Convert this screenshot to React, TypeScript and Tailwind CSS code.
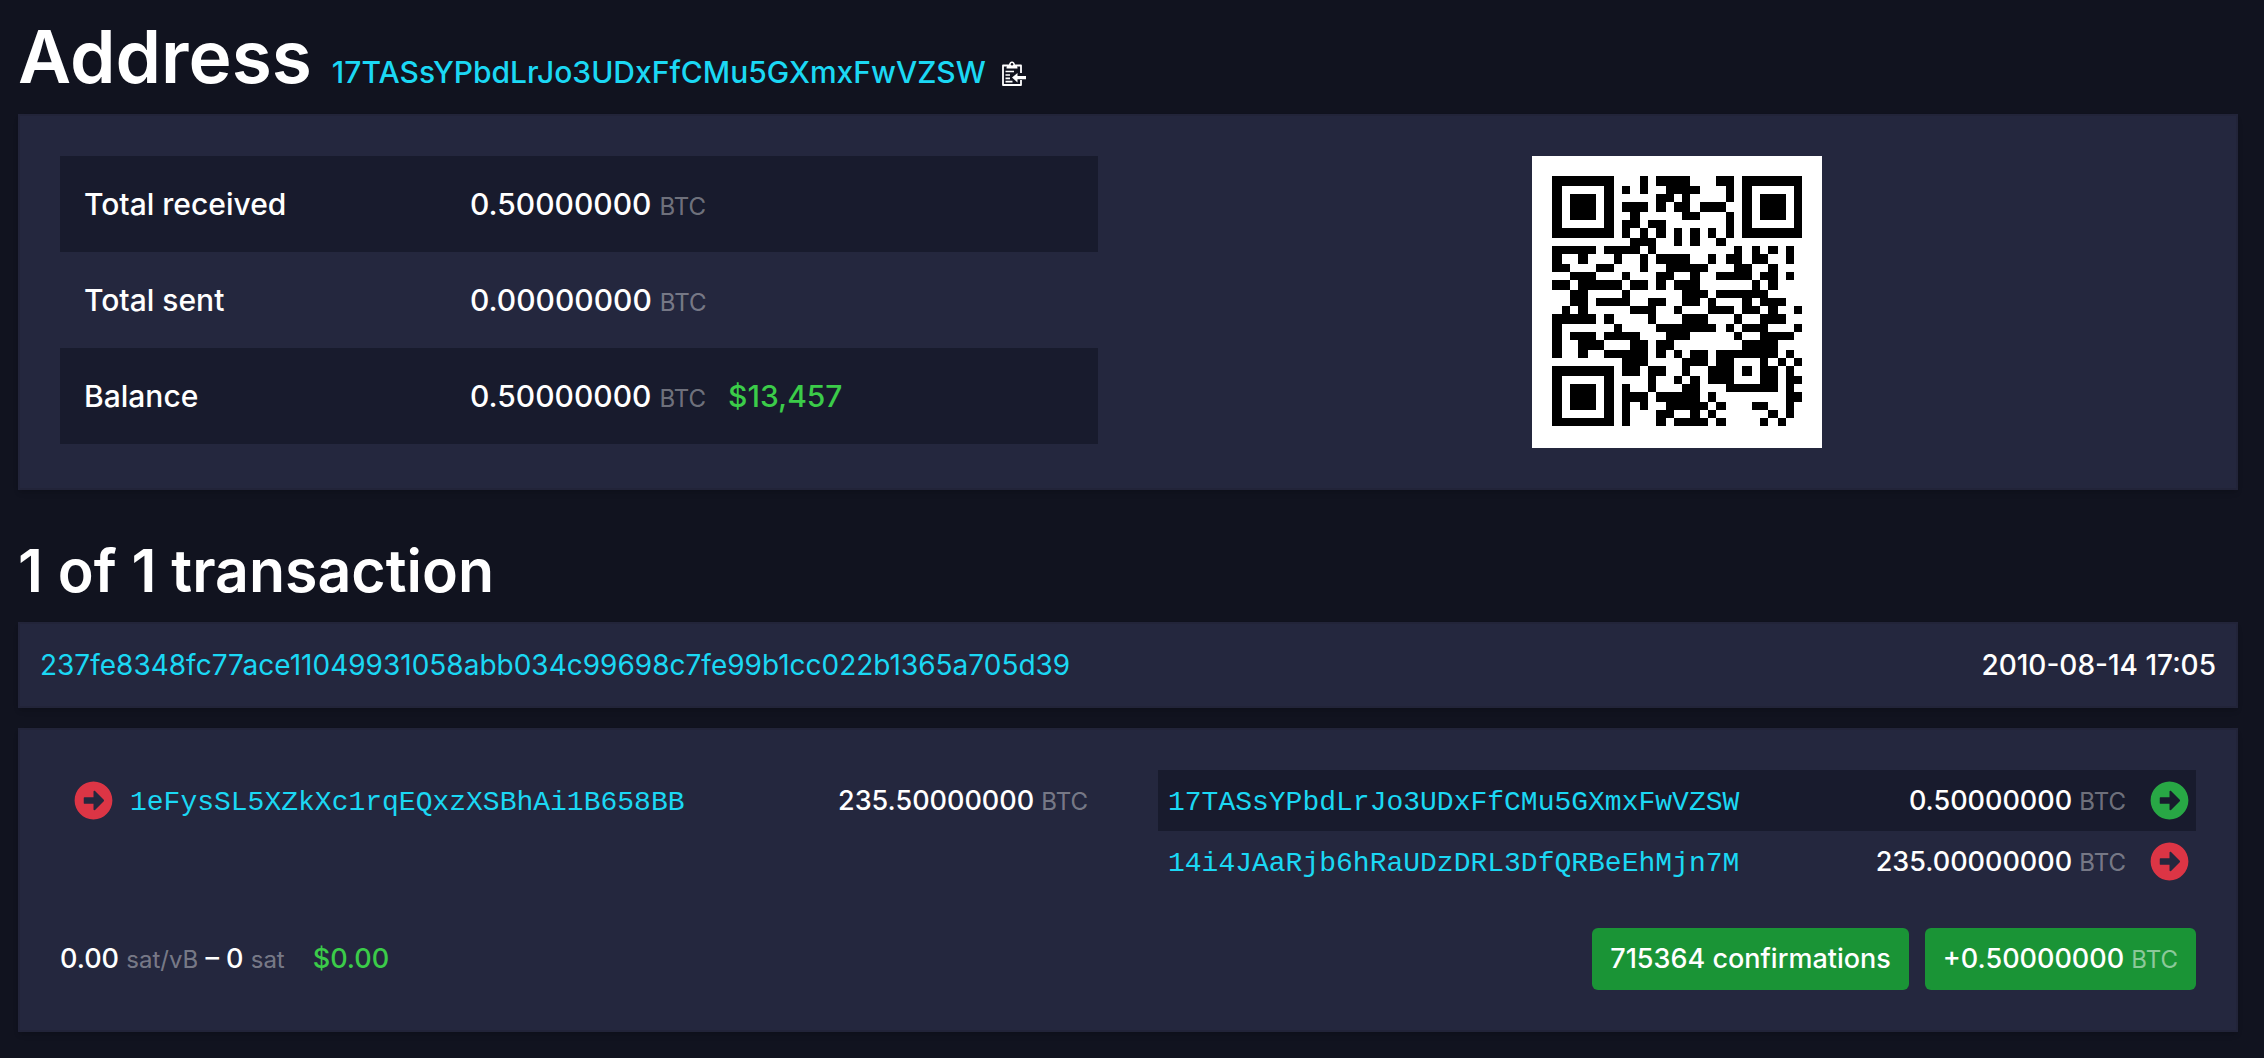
import { FaArrowAltCircleRight } from "react-icons/fa";

// Each row lists the start and end module of every dark run.
const qrRuns: number[][] = [
  [0, 7, 10, 11, 12, 16, 19, 21, 22, 29],
  [0, 1, 6, 7, 8, 9, 10, 11, 13, 17, 20, 21, 22, 23, 28, 29],
  [0, 1, 2, 5, 6, 7, 12, 14, 15, 16, 20, 21, 22, 23, 24, 27, 28, 29],
  [0, 1, 2, 5, 6, 7, 8, 11, 12, 13, 14, 16, 17, 20, 22, 23, 24, 27, 28, 29],
  [0, 1, 2, 5, 6, 7, 9, 10, 15, 17, 20, 21, 22, 23, 24, 27, 28, 29],
  [0, 1, 6, 7, 8, 10, 11, 13, 20, 21, 22, 23, 28, 29],
  [0, 7, 8, 9, 10, 11, 12, 13, 14, 15, 16, 17, 18, 19, 20, 21, 22, 29],
  [9, 12, 14, 15, 16, 17, 19, 20],
  [0, 5, 6, 10, 11, 12, 21, 22, 23, 24, 25, 26, 27, 28],
  [0, 1, 3, 4, 7, 8, 10, 11, 12, 16, 18, 19, 20, 22, 23, 25, 27, 28],
  [0, 2, 5, 7, 10, 11, 13, 18, 21, 23, 25, 26],
  [2, 5, 8, 9, 12, 14, 16, 17, 19, 23, 24, 26, 27, 28],
  [0, 2, 3, 8, 9, 11, 12, 13, 14, 17, 23, 24, 25, 26],
  [2, 4, 8, 9, 15, 18, 19, 25],
  [2, 4, 5, 9, 11, 13, 15, 17, 18, 19, 22, 23, 24, 27],
  [1, 2, 3, 4, 9, 12, 14, 15, 18, 21, 22, 24, 25, 26, 28, 29],
  [0, 5, 6, 7, 11, 12, 15, 18, 21, 22, 24, 27],
  [0, 1, 7, 8, 12, 19, 20, 21, 22, 25, 28, 29],
  [0, 1, 2, 5, 6, 10, 13, 16, 21, 22, 24, 28],
  [0, 1, 3, 6, 9, 11, 12, 14, 22, 26],
  [0, 1, 3, 4, 6, 11, 12, 13, 14, 15, 16, 18, 19, 26, 27, 28],
  [8, 11, 15, 18, 19, 21, 24, 25, 26, 27, 28, 29],
  [0, 7, 8, 10, 11, 13, 15, 16, 18, 21, 22, 23, 24, 26, 27, 28],
  [0, 1, 6, 7, 11, 12, 14, 15, 16, 17, 18, 21, 24, 26, 27, 29],
  [0, 1, 2, 5, 6, 7, 8, 9, 11, 12, 15, 17, 20, 26, 27, 28],
  [0, 1, 2, 5, 6, 7, 8, 11, 12, 17, 18, 19, 27, 29],
  [0, 1, 2, 5, 6, 7, 8, 9, 10, 11, 13, 18, 19, 20, 23, 25, 27, 28],
  [0, 1, 6, 7, 8, 9, 12, 14, 16, 17, 18, 19, 25, 26, 27, 28],
  [0, 7, 8, 9, 12, 13, 14, 18, 19, 20, 24, 25, 26, 27],
];

// Snaps a module boundary to the 125-unit grid of the code.
const edge = (module: number) => Math.ceil((module * 125) / 29);

const qrPath = qrRuns
  .map((runs, y) => {
    let d = "";
    for (let i = 0; i < runs.length; i += 2) {
      d += `M${edge(runs[i])} ${edge(y)}H${edge(runs[i + 1])}V${edge(y + 1)}H${edge(runs[i])}Z`;
    }
    return d;
  })
  .join("");

function QrCode() {
  return (
    <div className="flex h-[292px] w-[290px] justify-center bg-white pt-5">
      <svg role="img" aria-label="Address QR code" viewBox="0 0 125 125" className="size-[250px]" shapeRendering="crispEdges">
        <path d={qrPath} fill="#000" />
      </svg>
    </div>
  );
}

function ClipboardIcon() {
  return (
    <svg viewBox="0 0 24 26" className="h-[26px] w-6" fill="none" stroke="#fff" aria-hidden="true">
      <path d="M19 12V4.500H1V24H19V19" strokeWidth="1.800" strokeLinejoin="round" />
      <path
        d="M4.500 7.500C4.500 4.800 5.500 4 7 4C7.200 1.800 8.200 0.500 10 0.500S12.800 1.800 13 4C14.500 4 15.500 4.800 15.500 7.500Z"
        fill="#fff"
        stroke="none"
      />
      <circle cx="10" cy="3.200" r="1.200" fill="#11131f" stroke="none" />
      <path d="M3.500 10.500H12M3.500 14H8M3.500 17.300H8M3.500 20.700H10.500" strokeWidth="1.700" />
      <path d="M10 16.500L15.500 12V15H24V18.200H15.500V21.500Z" fill="#fff" stroke="none" />
    </svg>
  );
}

function Unit({ children, light }: { children: string; light?: boolean }) {
  return <span className={light ? "text-2xl font-normal text-white/50" : "text-2xl font-normal text-white/40"}>{children}</span>;
}

function Amount({ value }: { value: string }) {
  return (
    <span className="whitespace-nowrap">
      {value} <Unit>BTC</Unit>
    </span>
  );
}

const panel = "border-2 border-[#222439] bg-[#24273e] shadow-md";
const link = "text-[#1bd8f4]";
const mono = "pt-1 font-['Liberation_Mono',monospace] text-[28px]";

const summary = [
  { label: "Total received", value: "0.50000000" },
  { label: "Total sent", value: "0.00000000" },
  { label: "Balance", value: "0.50000000", fiat: "$13,457" },
];

const outputs = [
  { address: "17TASsYPbdLrJo3UDxFfCMu5GXmxFwVZSW", value: "0.50000000", spent: false },
  { address: "14i4JAaRjb6hRaUDzDRL3DfQRBeEhMjn7M", value: "235.00000000", spent: true },
];

export default function App() {
  return (
    <main className="min-h-screen bg-[#11131f] pr-[26px] pb-[26px] pl-[18px] font-[Inter,sans-serif] text-[27px] leading-[42px] font-medium text-white">
      <header className="flex items-baseline gap-5 pt-[15px]">
        <h1 className="text-[73px] leading-[84px] font-semibold">Address</h1>
        <div className="flex items-center gap-4">
          <a href="#address" className={`text-[30px] leading-[48px] ${link}`}>
            17TASsYPbdLrJo3UDxFfCMu5GXmxFwVZSW
          </a>
          <button type="button" aria-label="Copy address" className="pt-1">
            <ClipboardIcon />
          </button>
        </div>
      </header>

      <section className={`mt-[15px] grid grid-cols-2 gap-[60px] p-10 ${panel}`}>
        <table className="w-full self-start text-[30px] leading-[48px]">
          <tbody>
            {summary.map((row) => (
              <tr key={row.label} className="h-24 odd:bg-[#181b2d]">
                <th scope="row" className="w-[410px] pl-6 text-left font-medium">
                  {row.label}
                </th>
                <td>
                  <Amount value={row.value} />
                  {row.fiat && <span className="ml-[22px] text-[#3bcc49]">{row.fiat}</span>}
                </td>
              </tr>
            ))}
          </tbody>
        </table>
        <div className="flex justify-center">
          <QrCode />
        </div>
      </section>

      <h2 className="mt-[46px] text-[59px] leading-[70px] font-semibold">1 of 1 transaction</h2>

      <section className={`mt-4 flex justify-between px-5 py-5 text-[28px] ${panel}`}>
        <a href="#transaction" className={`font-normal ${link}`}>
          237fe8348fc77ace11049931058abb034c99698c7fe99b1cc022b1365a705d39
        </a>
        <time dateTime="2010-08-14T17:05">2010-08-14 17:05</time>
      </section>

      <section className={`mt-5 p-10 ${panel}`}>
        <div className="grid grid-cols-2 items-start gap-[60px]">
          <table className="w-full">
            <tbody>
              <tr className="h-[61px]">
                <td className="w-[70px] pl-[14px]">
                  <FaArrowAltCircleRight className="size-[39px] text-[#dc3545]" />
                </td>
                <td className={mono}>
                  <a href="#input" className={link}>1eFysSL5XZkXc1rqEQxzXSBhAi1B658BB</a>
                </td>
                <td className="pr-[10px] text-right">
                  <Amount value="235.50000000" />
                </td>
              </tr>
            </tbody>
          </table>
          <table className="w-full">
            <tbody>
              {outputs.map((out) => (
                <tr key={out.address} className="h-[61px] odd:bg-[#181b2d]">
                  <td className={`pl-[10px] ${mono}`}>
                    <a href="#output" className={link}>{out.address}</a>
                  </td>
                  <td className="text-right">
                    <Amount value={out.value} />
                  </td>
                  <td className="w-[70px] pl-6">
                    <FaArrowAltCircleRight
                      className={out.spent ? "size-[39px] text-[#dc3545]" : "size-[39px] text-[#28a745]"}
                    />
                  </td>
                </tr>
              ))}
            </tbody>
          </table>
        </div>
        <footer className="mt-9 flex items-center justify-between">
          <p>
            0.00 <Unit>sat/vB</Unit> – 0 <Unit>sat</Unit>
            <span className="ml-7 text-[#3bcc49]">$0.00</span>
          </p>
          <div className="flex gap-4">
            <button type="button" className="rounded-[6px] bg-[#1a9436] px-[18px] py-[10px]">
              715364 confirmations
            </button>
            <button type="button" className="rounded-[6px] bg-[#1a9436] px-[18px] py-[10px]">
              +0.50000000 <Unit light>BTC</Unit>
            </button>
          </div>
        </footer>
      </section>
    </main>
  );
}
